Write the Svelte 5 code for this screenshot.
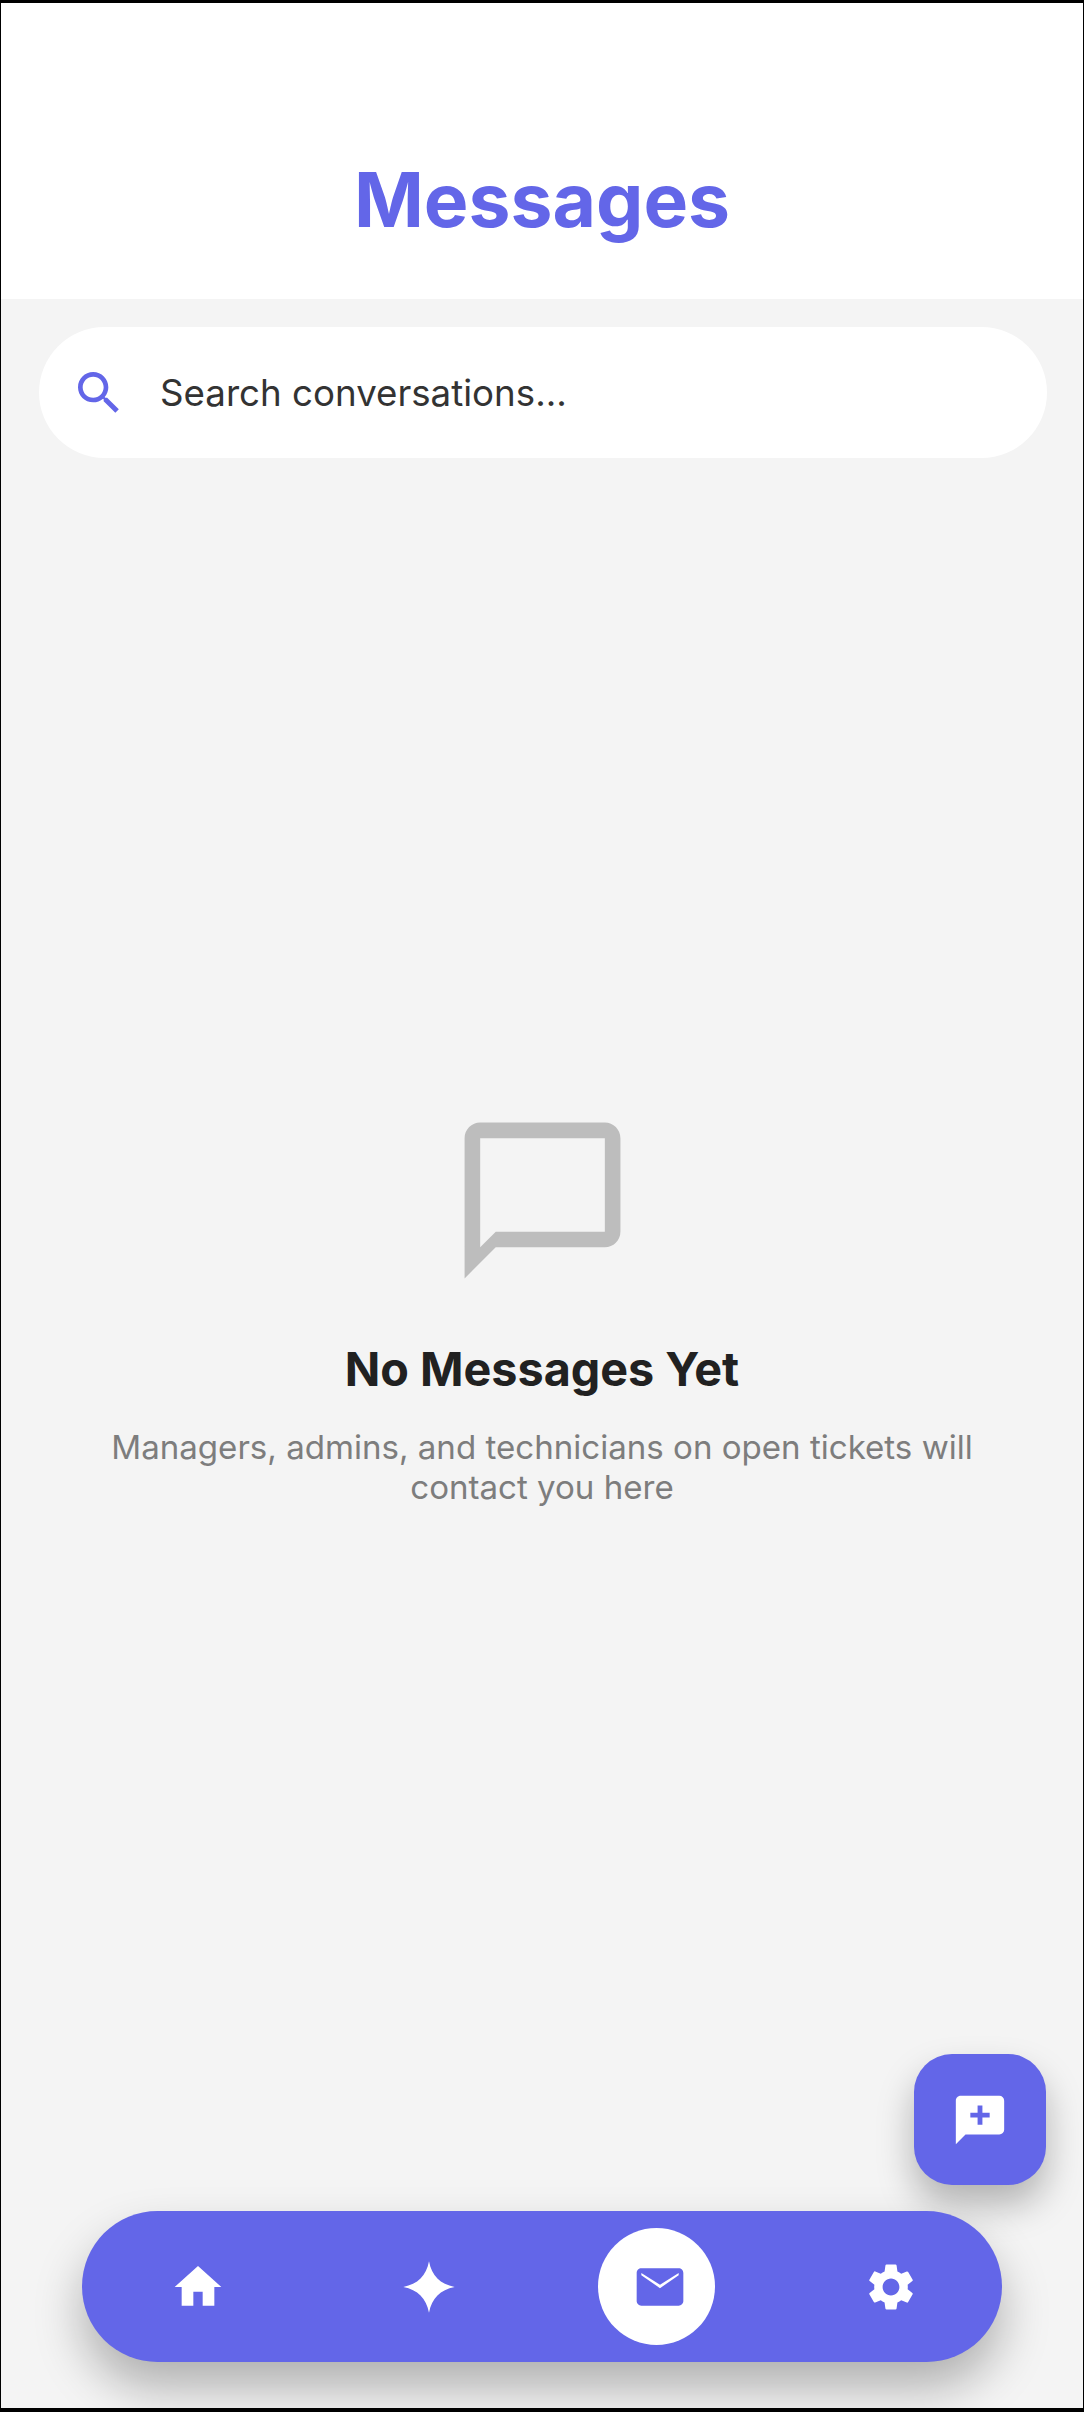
<script lang="ts">
  const tabs = [
    { name: "home", path: "M10 20v-6h4v6h5v-8h3L12 3 2 12h3v8z" },
    { name: "spark", path: "M12 1C13.200 7.200 16.800 10.800 23 12 16.800 13.200 13.200 16.800 12 23 10.800 16.800 7.200 13.200 1 12 7.200 10.800 10.800 7.200 12 1z" },
    { name: "mail", path: "M20 4H4c-1.100 0-1.990.900-1.990 2L2 18c0 1.100.900 2 2 2h16c1.100 0 2-.900 2-2V6c0-1.100-.900-2-2-2zm0 3l-8 5.500L4 7V6l8 5 8-5v1z", active: true },
    { name: "settings", path: "M19.140 12.940c.040-.300.060-.610.060-.940 0-.320-.020-.640-.070-.940l2.030-1.580c.180-.140.230-.410.120-.610l-1.920-3.320c-.120-.220-.370-.290-.590-.220l-2.390.960c-.500-.380-1.030-.700-1.620-.940l-.360-2.540c-.040-.240-.240-.410-.480-.410h-3.840c-.240 0-.430.170-.470.410l-.360 2.540c-.590.240-1.130.570-1.620.940l-2.390-.960c-.220-.080-.470 0-.590.220L2.740 8.870c-.120.210-.080.470.120.610l2.030 1.580c-.050.300-.090.630-.090.940s.020.640.070.940l-2.030 1.580c-.180.140-.230.410-.120.610l1.920 3.320c.120.220.370.290.590.220l2.390-.960c.500.380 1.030.700 1.620.940l.360 2.540c.050.240.240.410.480.410h3.840c.240 0 .440-.170.470-.410l.360-2.540c.590-.240 1.130-.560 1.620-.940l2.390.960c.220.080.470 0 .590-.220l1.920-3.320c.120-.220.070-.470-.120-.610l-2.010-1.580zM12 15.600c-1.980 0-3.600-1.620-3.600-3.600s1.620-3.600 3.600-3.600 3.600 1.620 3.600 3.600-1.620 3.600-3.600 3.600z" },
  ];
</script>

<div class="screen">
  <header class="top">
    <h1>Messages</h1>
  </header>

  <main class="content">
    <div class="search">
      <svg class="search-icon" viewBox="0 0 24 24">
        <path d="M15.500 14h-.790l-.280-.270C15.410 12.590 16 11.110 16 9.500 16 5.910 13.090 3 9.500 3S3 5.910 3 9.500 5.910 16 9.500 16c1.610 0 3.090-.590 4.230-1.570l.270.280v.790l5 4.990L20.490 19l-4.990-5zm-6 0C7.010 14 5 11.990 5 9.500S7.010 5 9.500 5 14 7.010 14 9.500 11.990 14 9.500 14z" />
      </svg>
      <span class="placeholder">Search conversations...</span>
    </div>

    <section class="empty">
      <svg class="empty-icon" viewBox="0 0 24 24">
        <path d="M20 2H4c-1.100 0-2 .900-2 2v18l4-4h14c1.100 0 2-.900 2-2V4c0-1.100-.900-2-2-2zm0 14H6l-2 2V4h16v12z" />
      </svg>
      <h2>No Messages Yet</h2>
      <p>Managers, admins, and technicians on open tickets will contact you here</p>
    </section>
  </main>

  <button class="fab" aria-label="New message">
    <svg viewBox="0 0 24 24">
      <path d="M20 2a2 2 0 0 1 2 2v12a2 2 0 0 1-2 2H6l-4 4V4c0-1.110.900-2 2-2h16zM11 6v3H8v2h3v3h2v-3h3V9h-3V6h-2z" />
    </svg>
  </button>

  <nav class="tabbar">
    {#each tabs as tab}
      <div class="tab" class:active={tab.active} aria-label={tab.name}>
        <svg viewBox="0 0 24 24"><path d={tab.path} /></svg>
      </div>
    {/each}
  </nav>
</div>

<style>
  :global(body) {
    margin: 0;
    background: #000;
  }
  .screen {
    position: relative;
    box-sizing: border-box;
    height: 2412px;
    display: flex;
    flex-direction: column;
    border-style: solid;
    border-color: #000;
    border-width: 3px 1px 4px 1px;
    background: #f4f4f4;
    font-family: Inter, "Liberation Sans", sans-serif;
    overflow: hidden;
  }
  .top {
    height: 296px;
    box-sizing: border-box;
    padding-top: 153px;
    background: #fff;
    text-align: center;
  }
  h1 {
    margin: 0;
    font-size: 75px;
    line-height: 88px;
    font-weight: 700;
    color: #6366e8;
  }
  .content {
    flex: 1;
    display: flex;
    flex-direction: column;
    padding-top: 28px;
  }
  .search {
    height: 131px;
    margin: 0 36px 0 38px;
    display: flex;
    align-items: center;
    gap: 33px;
    padding: 0 32px;
    border-radius: 66px;
    background: #fff;
  }
  .search-icon {
    width: 56px;
    height: 56px;
    fill: #6366e8;
  }
  .placeholder {
    font-size: 36.7px;
    color: #333;
  }
  .empty {
    display: flex;
    flex-direction: column;
    align-items: center;
    padding-top: 649px;
    text-align: center;
  }
  .empty-icon {
    width: 187px;
    height: 187px;
    fill: #bdbdbd;
  }
  h2 {
    margin: 47px 0 0;
    font-size: 46.7px;
    line-height: 56px;
    font-weight: 700;
    color: #212121;
  }
  p {
    width: 900px;
    margin: 30px 0 0;
    font-size: 33.1px;
    line-height: 40px;
    color: #7d7d7d;
  }
  .fab {
    position: absolute;
    left: 913px;
    top: 2051px;
    width: 132px;
    height: 131px;
    padding: 0;
    border: 0;
    border-radius: 38px;
    display: flex;
    align-items: center;
    justify-content: center;
    background: #6366e8;
    box-shadow: 0 20px 36px rgba(0, 0, 0, 0.27);
  }
  .fab svg {
    width: 58px;
    height: 58px;
    fill: #fff;
  }
  .tabbar {
    position: absolute;
    left: 81px;
    top: 2208px;
    width: 920px;
    height: 151px;
    box-sizing: border-box;
    padding-left: 57px;
    display: flex;
    align-items: center;
    gap: 114px;
    border-radius: 76px;
    background: #6366e8;
    box-shadow: 0 26px 48px rgba(0, 0, 0, 0.28);
  }
  .tab {
    flex: none;
    width: 117px;
    height: 117px;
    display: flex;
    align-items: center;
    justify-content: center;
    border-radius: 50%;
    fill: #fff;
  }
  .tab svg {
    width: 56px;
    height: 56px;
  }
  .tab.active {
    margin: 0 3px 0 -3px;
    background: #fff;
    fill: #6366e8;
  }
  /* glyph sits a little right of the white circle in the reference */
  .tab.active svg {
    transform: translateX(3px);
  }
</style>
